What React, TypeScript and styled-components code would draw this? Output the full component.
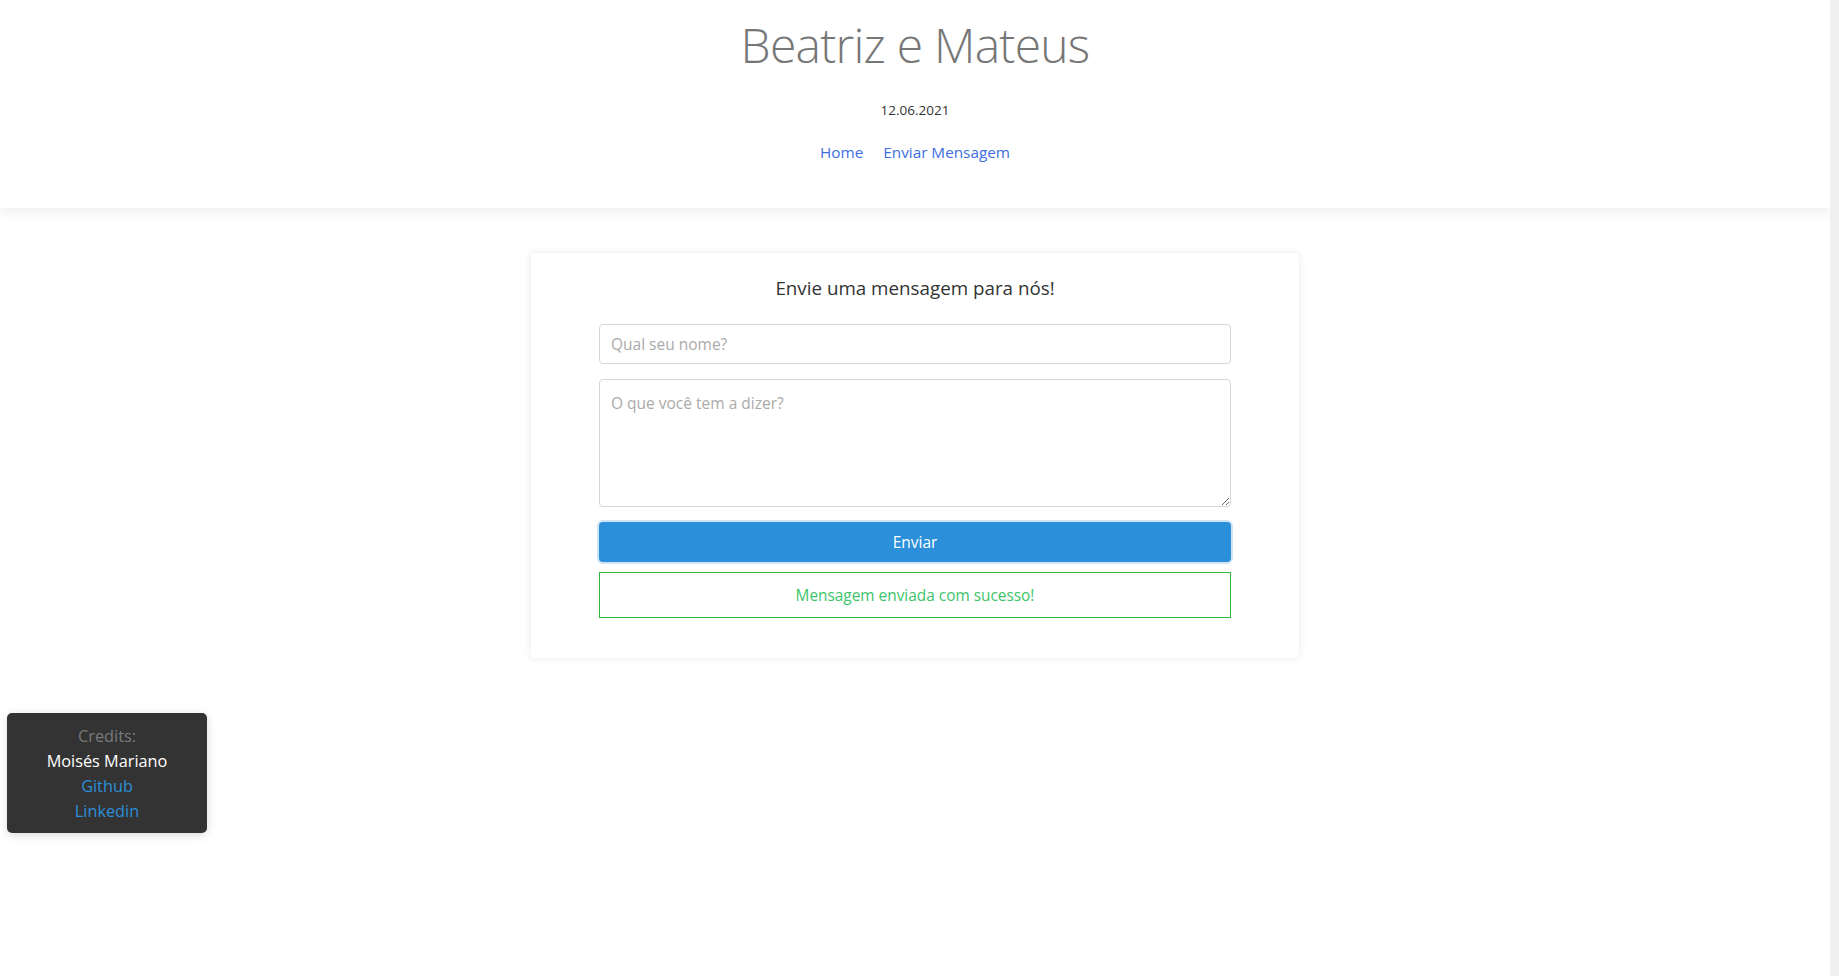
import React from "react";
import styled, { createGlobalStyle } from "styled-components";

const GlobalStyle = createGlobalStyle`
  * { box-sizing: border-box; }
  html, body { margin: 0; padding: 0; }
  html {
    border-right: 9px solid #f0f0f0;
    background: #fff;
  }
  body {
    background: #fff;
    font-family: "Open Sans", "Noto Sans", sans-serif;
    color: #333;
    min-height: 100vh;
  }
`;

const Page = styled.div`
  display: flex;
  flex-direction: column;
`;

const Header = styled.header`
  background: #fff;
  height: 208px;
  padding-top: 16px;
  display: flex;
  flex-direction: column;
  align-items: center;
  box-shadow: 0 2px 14px rgba(0, 0, 0, 0.09);
  position: relative;
  z-index: 1;
`;

const Title = styled.h1`
  margin: 0;
  font-size: 48px;
  line-height: 58px;
  font-weight: 300;
  letter-spacing: -0.75px;
  color: #777;
`;

const DateText = styled.div`
  margin-top: 26px;
  font-size: 13.5px;
  line-height: 20px;
  font-weight: 500;
  color: #333;
`;

const Nav = styled.nav`
  margin-top: 21px;
  display: flex;
  gap: 20px;
`;

const NavLink = styled.a`
  font-size: 15.3px;
  line-height: 22px;
  color: #3b6ee0;
  text-decoration: none;
`;

const Main = styled.main`
  display: flex;
  justify-content: center;
  padding-top: 45px;
`;

const Card = styled.section`
  width: 768px;
  background: #fff;
  border-radius: 4px;
  box-shadow: 0 0 10px rgba(0, 0, 0, 0.09);
  padding: 20px 68px 40px;
  display: flex;
  flex-direction: column;
  align-items: stretch;
`;

const CardTitle = styled.h2`
  margin: 0 0 21px;
  text-align: center;
  font-size: 18.8px;
  line-height: 30px;
  font-weight: 400;
  color: #333;
`;

const Field = styled.input`
  height: 40px;
  width: 100%;
  border: 1px solid #d6d6d6;
  border-radius: 4px;
  padding: 0 11px;
  font-family: inherit;
  font-size: 15.5px;
  color: #333;
  background: #fff;
  outline: none;
  &::placeholder { color: #aaa; }
`;

const Area = styled.textarea`
  margin-top: 15px;
  height: 128px;
  width: 100%;
  border: 1px solid #d6d6d6;
  border-radius: 4px;
  padding: 13px 11px 10px;
  font-family: inherit;
  font-size: 15.5px;
  line-height: 20px;
  color: #333;
  background: #fff;
  outline: none;
  resize: vertical;
  &::placeholder { color: #aaa; }
`;

const SendButton = styled.button`
  margin-top: 15px;
  height: 40px;
  width: 100%;
  border: none;
  border-radius: 4px;
  background: #2b90d9;
  color: #fff;
  font-family: inherit;
  font-size: 15.5px;
  box-shadow: 0 0 0 2px #cfe4f7;
  cursor: pointer;
`;

const Success = styled.div`
  margin-top: 10px;
  height: 46px;
  border: 1px solid #2db83d;
  display: flex;
  align-items: center;
  justify-content: center;
  color: #3cc46a;
  font-size: 15.4px;
`;

const Credits = styled.aside`
  margin: 55px 0 0 7px;
  width: 200px;
  height: 120px;
  background: #333;
  border-radius: 5px;
  box-shadow: 0 2px 10px rgba(0, 0, 0, 0.15);
  padding: 11px 0 9px;
  display: flex;
  flex-direction: column;
  align-items: center;
`;

const CreditLine = styled.span<{ $tone: "label" | "name" | "link" }>`
  font-size: 16.3px;
  line-height: 25px;
  color: ${(p) => (p.$tone === "label" ? "#7a7a7a" : p.$tone === "name" ? "#fff" : "#2b90d9")};
`;

export default function App() {
  return (
    <Page>
      <GlobalStyle />
      <Header>
        <Title>Beatriz e Mateus</Title>
        <DateText>12.06.2021</DateText>
        <Nav>
          <NavLink href="#">Home</NavLink>
          <NavLink href="#">Enviar Mensagem</NavLink>
        </Nav>
      </Header>
      <Main>
        <Card>
          <CardTitle>Envie uma mensagem para nós!</CardTitle>
          <Field placeholder="Qual seu nome?" />
          <Area placeholder="O que você tem a dizer?" />
          <SendButton>Enviar</SendButton>
          <Success>Mensagem enviada com sucesso!</Success>
        </Card>
      </Main>
      <Credits>
        <CreditLine $tone="label">Credits:</CreditLine>
        <CreditLine $tone="name">Moisés Mariano</CreditLine>
        <CreditLine $tone="link">Github</CreditLine>
        <CreditLine $tone="link">Linkedin</CreditLine>
      </Credits>
    </Page>
  );
}
